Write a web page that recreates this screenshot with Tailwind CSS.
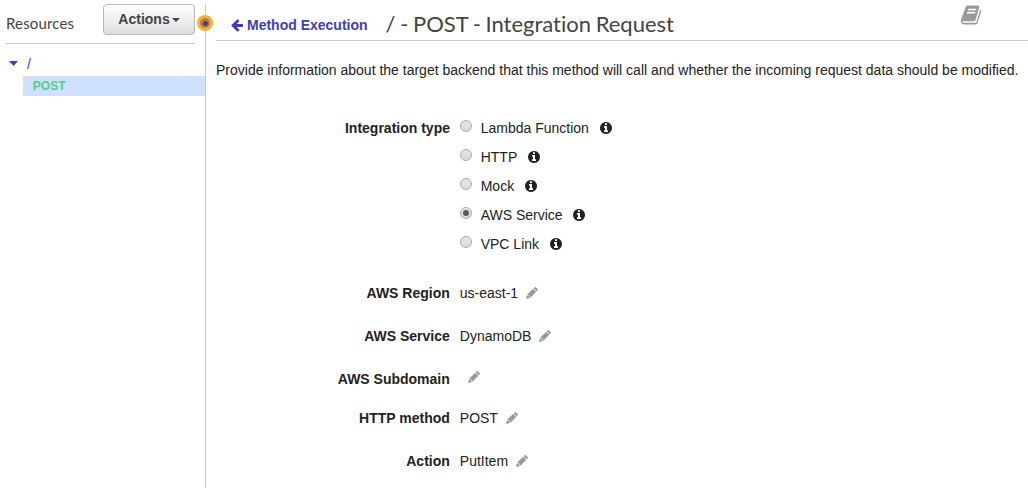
<!DOCTYPE html>
<html lang="en">
<head>
<meta charset="utf-8">
<title>Integration Request</title>
<script src="https://cdn.jsdelivr.net/npm/@tailwindcss/browser@4"></script>
</head>
<body class="h-[488px] w-[1028px] overflow-hidden bg-white font-['Liberation_Sans',Arial,sans-serif] text-sm leading-5 text-[#222]">
<svg class="hidden">
  <symbol id="info" viewBox="0 0 1792 1792"><path d="M1152 1376v-160q0-14-9-23t-23-9h-96v-512q0-14-9-23t-23-9h-320q-14 0-23 9t-9 23v160q0 14 9 23t23 9h96v320h-96q-14 0-23 9t-9 23v160q0 14 9 23t23 9h448q14 0 23-9t9-23zm-128-896v-160q0-14-9-23t-23-9h-192q-14 0-23 9t-9 23v160q0 14 9 23t23 9h192q14 0 23-9t9-23zm640 416q0 209-103 385.5t-279.5 279.5-385.5 103-385.5-103-279.5-279.5-103-385.5 103-385.5 279.5-279.5 385.5-103 385.5 103 279.5 279.5 103 385.5z"/></symbol>
  <symbol id="pencil" viewBox="0 0 12 12"><path d="M8.5 .4Q9.3 -.3 10.1 .4L11.6 1.9Q12.3 2.7 11.6 3.5L10.8 4.3L7.7 1.2ZM7.2 1.7L10.3 4.8L4.4 10.7L3.6 9.9L3.4 8.6L2.1 8.4L1.3 7.6ZM.9 8.1L1.7 8.9L3 9.1L3.1 10.3L3.9 11.1L.1 12Z"/></symbol>
</svg>
<div class="flex h-full">
  <aside class="h-full w-[205px] shrink-0">
    <div class="ml-[6px] flex h-[44px] w-[189px] justify-between border-b border-[#c8c8c8] pt-1">
      <h2 class="pt-[9px] font-[Lato,sans-serif] text-[15px] leading-5 tracking-[0.15px] text-[#444]">Resources</h2>
      <button class="flex h-[31px] w-[92px] items-center justify-center gap-[2px] rounded-[4px] border border-[#b8b8b8] bg-linear-to-b from-white to-[#dedede] pb-[2px] font-bold text-[#444]">Actions<svg class="mt-[2px] h-1 w-2" viewBox="0 0 8 4" fill="#444"><path d="M0 0h8L4 4z"/></svg></button>
    </div>
    <div class="flex h-8 items-center pt-[7px] pl-[9px] text-[#3b3fb8]"><svg class="h-[5px] w-[9px]" viewBox="0 0 9 5" fill="#3b3fc0"><path d="M0 0h9L4.5 5z"/></svg><span class="ml-[9px]">/</span></div>
    <div class="ml-[23px] h-5 bg-[#d0e1ff] pl-[9.8px] text-xs leading-5 font-bold text-[#4fce86]">POST</div>
  </aside>
  <div class="relative mt-1 w-px shrink-0 bg-[#c8c8c8]">
    <div class="absolute top-[11px] left-[-8px] size-4 rounded-full bg-[#fdae35]"><div class="absolute top-[3px] left-[3px] size-[10px] rounded-full bg-[#b9802f]"></div><div class="absolute top-[5.5px] left-[5.5px] size-[5px] rounded-full bg-[#3a38c4]"></div></div>
  </div>
  <main class="ml-[10px] w-[812px] shrink-0">
    <header class="flex h-[41px] border-b border-[#c8c8c8]">
      <a class="mt-[15px] ml-[14px] flex h-5 items-center font-bold text-[#3b3fb8]"><svg class="mr-[3px] mb-[1px] size-[14px]" viewBox="0 0 1792 1792" fill="currentColor"><path d="M1664 896v128q0 53-32.5 90.5t-84.5 37.5h-704l293 294q38 36 38 90t-38 90l-75 76q-37 37-90 37-52 0-91-37l-651-652q-37-37-37-90 0-52 37-91l651-650q38-38 91-38 52 0 90 38l75 74q38 38 38 91t-38 91l-293 293h704q52 0 84.5 37.5t32.5 90.5z"/></svg>Method Execution</a>
      <h1 class="mt-[10px] ml-[18px] font-[Lato,sans-serif] text-[22px] leading-7 whitespace-nowrap text-[#444] [font-variant-ligatures:none] [word-spacing:-1px]">/ - POST - Integration Request</h1>
      <svg class="mt-[4px] mr-[46.5px] ml-auto size-[22px]" viewBox="0 0 1792 1792" fill="#999"><path d="M1703 478q40 57 18 129l-275 906q-19 64-76.5 107.5t-122.5 43.5h-923q-77 0-148.5-53.5t-99.5-131.5q-24-67-2-127 0-4 3-27t4-37q1-8-3-21.5t-3-19.5q2-11 8-21t16.5-23.5 16.5-23.5q23-38 45-91.5t30-91.5q3-10 .5-30t-.5-28q3-11 17-28t17-23q21-36 42-92t25-90q1-9-2.5-32t.5-28q4-13 22-30.5t22-22.5q19-26 42.5-84.5t27.5-96.5q1-8-3-25.5t-2-26.5q2-8 9-18t18-23 17-21q8-12 16.5-30.5t15-35 16-36 19.5-32 26.5-23.5 36-11.5 47.5 5.5l-1 3q38-9 51-9h761q74 0 114 56t18 130l-274 906q-36 119-71.5 153.5t-128.5 34.5h-869q-27 0-38 15-11 16-1 43 24 70 144 70h923q29 0 56-15.5t35-41.5l300-987q7-22 5-57 38 15 59 43zm-1064 2q-4 13 2 22.5t20 9.5h608q13 0 25.5-9.5t16.5-22.5l21-64q4-13-2-22.5t-20-9.5h-608q-13 0-25.5 9.5t-16.5 22.5zm-83 256q-4 13 2 22.5t20 9.5h608q13 0 25.5-9.5t16.5-22.5l21-64q4-13-2-22.5t-20-9.5h-608q-13 0-25.5 9.5t-16.5 22.5z"/></svg>
    </header>
    <p class="mt-[19px] whitespace-nowrap">Provide information about the target backend that this method will call and whether the incoming request data should be modified.</p>
    <section class="mt-[38px] flex gap-[10px]">
      <div class="w-[234px] text-right font-bold">Integration type</div>
      <div class="flex flex-col gap-[9px]">
        <div class="flex h-5"><i class="mt-[2px] mr-[8.7px] size-3 rounded-full border border-[#aaa] bg-linear-to-b from-[#e6e6e6] to-[#dadada]"></i>Lambda Function<svg class="mt-[3px] ml-[9.7px] size-[14px]" fill="#222"><use href="#info"/></svg></div>
        <div class="flex h-5"><i class="mt-[2px] mr-[8.7px] size-3 rounded-full border border-[#aaa] bg-linear-to-b from-[#e6e6e6] to-[#dadada]"></i>HTTP<svg class="mt-[3px] ml-[9.7px] size-[14px]" fill="#222"><use href="#info"/></svg></div>
        <div class="flex h-5"><i class="mt-[2px] mr-[8.7px] size-3 rounded-full border border-[#aaa] bg-linear-to-b from-[#e6e6e6] to-[#dadada]"></i>Mock<svg class="mt-[3px] ml-[9.7px] size-[14px]" fill="#222"><use href="#info"/></svg></div>
        <div class="flex h-5"><i class="mt-[2px] mr-[8.7px] flex size-3 items-center justify-center rounded-full border border-[#aaa] bg-linear-to-b from-[#e6e6e6] to-[#dadada]"><b class="size-[6px] rounded-full bg-[#5a5a5a]"></b></i>AWS Service<svg class="mt-[3px] ml-[9.7px] size-[14px]" fill="#222"><use href="#info"/></svg></div>
        <div class="flex h-5"><i class="mt-[2px] mr-[8.7px] size-3 rounded-full border border-[#aaa] bg-linear-to-b from-[#e6e6e6] to-[#dadada]"></i>VPC Link<svg class="mt-[3px] ml-[9.7px] size-[14px]" fill="#222"><use href="#info"/></svg></div>
      </div>
    </section>
    <div class="mt-[29px] flex h-5"><b class="mr-[10px] w-[233.8px] text-right">AWS Region</b>us-east-1<svg class="mt-1 ml-2 size-3" fill="#999"><use href="#pencil"/></svg></div>
    <div class="mt-[23px] flex h-5"><b class="mr-[10px] w-[233.8px] text-right">AWS Service</b>DynamoDB<svg class="mt-1 ml-2 size-3" fill="#999"><use href="#pencil"/></svg></div>
    <div class="mt-[23px] flex h-5"><b class="mr-[10px] w-[233.8px] text-right">AWS Subdomain</b><svg class="mt-[2px] ml-2 size-3" fill="#999"><use href="#pencil"/></svg></div>
    <div class="mt-[19px] flex h-5"><b class="mr-[10px] w-[233.8px] text-right">HTTP method</b>POST<svg class="mt-1 ml-2 size-3" fill="#999"><use href="#pencil"/></svg></div>
    <div class="mt-[23px] flex h-5"><b class="mr-[10px] w-[233.8px] text-right">Action</b>PutItem<svg class="mt-1 ml-2 size-3" fill="#999"><use href="#pencil"/></svg></div>
  </main>
</div>
</body>
</html>
